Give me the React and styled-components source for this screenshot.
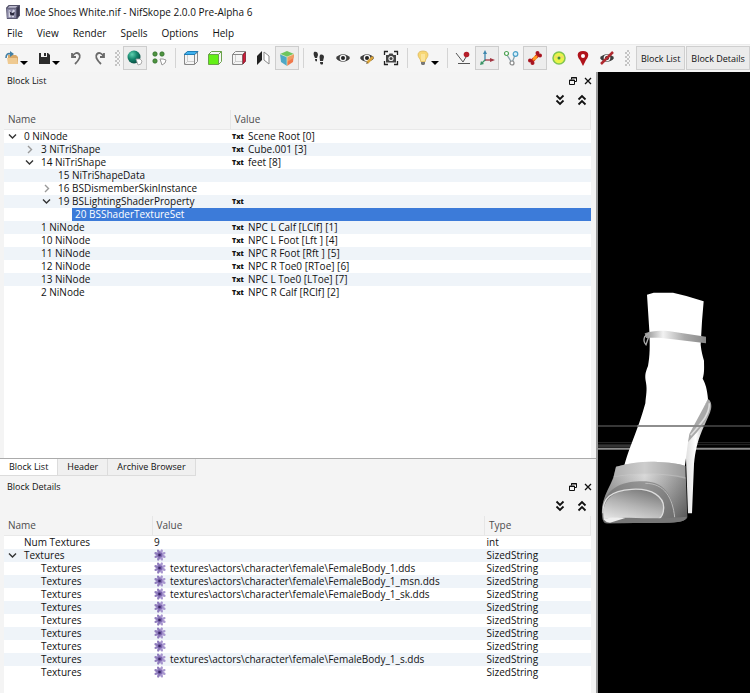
import React from "react";
import { useState } from "react";
import styled, { createGlobalStyle } from "styled-components";

const GlobalStyle = createGlobalStyle`
    *{
        box-sizing: border-box;
    }
    body{
        margin: 0;
        background: #f4f4f4;
        color: #111;
        font-family: "Open Sans", "Noto Sans", sans-serif;
        font-size: 10px;
    }
    button{
        font: inherit;
        color: inherit;
        background: none;
        border: 0;
        padding: 0;
        margin: 0;
    }
    svg{
        display: block;
    }
`;

const Window = styled.div`
    min-height: 100vh;
    display: flex;
    flex-direction: column;
`;
const TitleBar = styled.header`
    display: flex;
    align-items: center;
    gap: 5px;
    height: 23px;
    padding-left: 6px;
    background: #fff;
`;
const WindowTitle = styled.h1`
    margin: 0;
    font-size: 10px;
    font-weight: 400;
    white-space: nowrap;
`;
const MenuBar = styled.nav`
    display: flex;
    gap: 14px;
    height: 21px;
    padding-left: 7px;
    background: #fff;
`;
const MenuItem = styled.button`
    line-height: 21px;
`;
const ToolBar = styled.div`
    display: flex;
    align-items: center;
    height: 28px;
    padding-bottom: 1px;
    background: #f5f5f5;
    border-top: 1px solid #ececec;
    overflow: hidden;
`;
const ToolButton = styled.button`
    flex: none;
    display: flex;
    align-items: center;
    justify-content: ${(p) => (p.$menu ? "flex-start" : "center")};
    width: ${(p) => (p.$menu ? 32 : 24)}px;
    height: 24px;
    padding-left: ${(p) => (p.$menu ? 4 : 0)}px;
    border: ${(p) => (p.$on ? "1px solid #cdcdcd" : "0")};
    background: ${(p) => (p.$on ? "#ededed" : "transparent")};
`;
const Caret = styled.svg`
    flex: none;
    align-self: flex-end;
    margin-bottom: 5px;
`;
const Separator = styled.span`
    flex: none;
    width: 8px;
    height: 20px;
    background: linear-gradient(#d4d4d4, #d4d4d4) 4px 0 / 1px 100% no-repeat;
`;
const Grip = styled.span`
    flex: none;
    width: 5px;
    height: 16px;
    margin: 0 ${(p) => p.$space || 3}px;
    background: repeating-conic-gradient(#c4c4c4 0 25%, #f5f5f5 0 50%) 0 0 / 4px 4px;
`;
const PanelButton = styled.button`
    flex: none;
    height: 24px;
    margin-right: 1px;
    padding: 0 4px;
    border: 1px solid #cfcfcf;
    background: #ebebeb;
    font-size: 9px;
    white-space: nowrap;
`;
const Workspace = styled.main`
    flex: 1;
    display: grid;
    grid-template-columns: minmax(0, 598fr) minmax(0, 152fr);
`;
const Docks = styled.div`
    display: flex;
    flex-direction: column;
    border-right: 2px solid #9a9a9a;
`;
const Dock = styled.section`
    flex: ${(p) => p.$grow} 1 0;
    display: flex;
    flex-direction: column;
`;
const DockTitle = styled.div`
    display: flex;
    align-items: center;
    gap: 7px;
    height: 17px;
    padding: 0 4px 0 7px;
`;
const DockName = styled.h2`
    flex: 1;
    margin: 0;
    font-size: 9px;
    font-weight: 400;
`;
const DockTools = styled.div`
    display: flex;
    justify-content: flex-end;
    align-items: center;
    gap: 12px;
    height: 21px;
    padding-right: 9px;
`;
const TreeFrame = styled.div`
    flex: 1;
    margin: 0 5px 0 4px;
    background: linear-gradient(#f4f4f4 19px, #fff 19px);
`;
const Tree = styled.table`
    width: 100%;
    table-layout: fixed;
    border-collapse: collapse;
`;
const HeadCell = styled.th`
    width: ${(p) => p.$width || "auto"};
    height: 19px;
    padding: 0 0 0 4px;
    border-right: 1px solid #e6e6e6;
    border-bottom: 1px solid #e9e9e9;
    color: #4c4c4c;
    font-weight: 400;
    line-height: 16px;
    text-align: left;
`;
const Row = styled.tr`
    background: ${(p) => (p.$selected ? "#3c7bd9" : p.$odd ? "#eff4f9" : "#fff")};
    color: ${(p) => (p.$selected ? "#fff" : "inherit")};
`;
const Cell = styled.td`
    height: 13px;
    padding: 0;
    line-height: 13px;
    white-space: nowrap;
    overflow: hidden;
`;
const NameBox = styled.div`
    display: flex;
    height: 13px;
    padding-left: ${(p) => p.$depth * 17}px;
    background: ${(p) => (p.$selected ? "#fff" : "none")};
`;
const Expander = styled.button`
    flex: none;
    display: flex;
    align-items: center;
    justify-content: center;
    width: 17px;
    height: 13px;
`;
const NodeName = styled.span`
    flex: 1;
    padding-left: 3px;
    background: ${(p) => (p.$selected ? "#3c7bd9" : "none")};
`;
const ValueBox = styled.div`
    display: flex;
    align-items: center;
    gap: 4px;
    height: 13px;
    padding-left: 2px;
`;
const TxtMark = styled.span`
    width: 12px;
    font-size: 7px;
    font-weight: 800;
`;
const Tabs = styled.div`
    display: flex;
    align-items: flex-start;
    height: 20px;
    border-top: 1px solid #ababab;
`;
const Tab = styled.button`
    height: 17px;
    padding: 0 9px;
    font-size: 9px;
    line-height: 16px;
    background: ${(p) => (p.$active ? "#fff" : "#f0f0f0")};
    border-right: 1px solid #dcdcdc;
    border-bottom: 1px solid #dcdcdc;
`;
const Viewport = styled.div`
    background: #000;
    overflow: hidden;
`;

const Icon = ({ children, size = 16 }) => (
    <svg width={size} height={size} viewBox="0 0 16 16" fill="none" aria-hidden="true">{children}</svg>
);
const DownCaret = () => (
    <Caret width="8" height="4" viewBox="0 0 8 4"><path d="M0 0h8L4 4z" fill="#000" /></Caret>
);

const AppIcon = () => (
    <Icon size={14}>
        <path d="M0 3 3 0h13v12l-3 4H1z" fill="#55546b" />
        <path d="M1 4h11v11H1z" fill="#8583a0" />
        <path d="M12 4l3-3v11l-3 3z" fill="#37364d" />
        <path d="M2 3l2-2h9l-2 2z" fill="#bdbbd0" />
        <path d="M3 6h2l1 4 2-5 2 1-1 8H7l-1-2-1 2H3z" fill="#d9d9e8" />
        <path d="M4 7l3 2 3-1-1 4H5z" fill="#2d2c42" />
    </Icon>
);
const OpenIcon = () => (
    <Icon>
        <path d="M4 5h8l2 2v7H4z" fill="#d9a867" />
        <path d="M3 8h10l1 6H4z" fill="#efca91" />
        <path d="M2 8c0-4 2-5 5-4" stroke="#427fa3" strokeWidth="1.600" />
        <path d="M6 1l4 3-4 3z" fill="#427fa3" />
    </Icon>
);
const SaveIcon = () => (
    <Icon>
        <path d="M3 3h9l2 2v9H3z" fill="#2c2c2c" />
        <path d="M5 3h6v4H5z" fill="#f5f5f5" />
        <path d="M8 3h2v3H8z" fill="#2c2c2c" />
    </Icon>
);
const UndoIcon = () => (
    <Icon>
        <path d="M4 3v4h4M4 7c2-4 5-5 7-3s1 5-4 10" stroke="#6a6a6a" strokeWidth="1.800" />
    </Icon>
);
const RedoIcon = () => (
    <Icon>
        <path d="M12 3v4H8M12 7C10 3 7 2 5 4s-1 5 4 10" stroke="#6a6a6a" strokeWidth="1.800" />
    </Icon>
);
const SphereIcon = () => (
    <Icon>
        <defs>
            <radialGradient id="ball" cx=".35" cy=".3" r=".75">
                <stop offset="0" stopColor="#5fd1b0" />
                <stop offset=".5" stopColor="#16866d" />
                <stop offset="1" stopColor="#074a40" />
            </radialGradient>
        </defs>
        <circle cx="7" cy="7" r="6.500" fill="url(#ball)" />
        <path d="M9 9l4 0 2 2-1 3-3 1z" fill="#fff" stroke="#999" strokeWidth=".8" />
    </Icon>
);
const VertexIcon = () => (
    <Icon>
        <g fill="#4f9440" stroke="#2c6a2a" strokeWidth=".7">
            <circle cx="4" cy="4" r="2.200" />
            <circle cx="11" cy="4" r="2.200" />
            <circle cx="4" cy="11" r="2.200" />
        </g>
        <path d="M9 9h3l3 1-1 3-3 2z" fill="#fff" stroke="#999" />
    </Icon>
);
const BoxIcon = ({ face }) => (
    <Icon>
        {face === "front" && <path d="M1.500 4.500h10v10h-10z" fill="#64f016" />}
        {face === "side" && <path d="M11.500 4.500l3-3v10l-3 3z" fill="#d11c3a" />}
        {face === "top" && <path d="M1.500 4.500l3-3h10l-3 3z" fill="#3fb1ee" />}
        <path
            d="M1.500 4.500h10v10h-10zM1.500 4.500l3-3h10l-3 3M14.500 1.500v10l-3 3"
            stroke={face === "front" ? "#6aa24a" : "#888"}
            strokeLinejoin="round"
        />
        {face === "top" && <path d="M1 4.500h11l3-3H4.500z" stroke="#1e7fb9" />}
        {face !== "front" && <path d="M4.500 5v6.500H11M4.500 11.500l-3 3" stroke="#bbb" strokeWidth=".7" />}
        {face === "side" && <path d="M12 5l2.500-3v9L12 14z" stroke="#8e1427" strokeWidth=".7" />}
    </Icon>
);
const FlipIcon = () => (
    <Icon>
        <path d="M2 6l5-5v9l-5 5z" fill="#222" />
        <path d="M9 2l5 4v8l-5-4z" fill="#fff" stroke="#888" />
    </Icon>
);
const ShadedCubeIcon = () => (
    <Icon>
        <path d="M1 4l7-3 7 3-7 3z" fill="#6fc55e" />
        <path d="M1 4l7 3v9l-6-4z" fill="#4ea8c6" />
        <path d="M8 7l7-3-1 8-6 4z" fill="#f0784b" />
        <path d="M8 7l7-3-.5 4L8 12z" fill="#ef9c62" />
        <path d="M1 4l7 3 7-3M8 7v9" stroke="#d7e8c0" strokeWidth=".7" />
    </Icon>
);
const FeetIcon = () => (
    <Icon>
        <g fill="#333">
            <path d="M3 2c2-1 4 0 4 3L6 8H4C3 6 2 4 3 2zM4 9h2v2c-1 1-2 0-2-2z" />
            <path d="M9 5c2-1 4 0 4 2l-1 4H9C9 9 8 7 9 5zM9 12h3v2c-1 1-3 1-3-2z" />
        </g>
    </Icon>
);
const EyeIcon = ({ pencil, struck }) => (
    <Icon>
        <path d="M1 8c3-5 11-5 14 0-3 5-11 5-14 0z" fill="#3d3d3d" />
        <circle cx="8" cy="8" r="3.300" fill="#f5f5f5" />
        <circle cx="8" cy="8" r="2" fill="#222" />
        {pencil && <path d="M8 13l6-6" stroke="#d9a33a" strokeWidth="2.500" />}
        {pencil && <path d="M7 14l1-2 1 1z" fill="#444" />}
        {struck && <path d="M2 14L14 2" stroke="#b02a30" strokeWidth="2.500" />}
    </Icon>
);
const CameraIcon = () => (
    <Icon>
        <path d="M1.500 5V1.500H5M11 1.500h3.500V5M14.500 11v3.500H11M5 14.500H1.500V11" stroke="#222" strokeWidth="1.300" />
        <path d="M3 5h2.500l1-1.500h3l1 1.500H13v7.500H3z" fill="#444" />
        <circle cx="8" cy="8.500" r="2.600" fill="#eee" />
        <circle cx="8" cy="8.500" r="1.500" fill="#444" />
    </Icon>
);
const BulbIcon = () => (
    <Icon>
        <path d="M8 1c6 0 6 5 3 8l-1 3H6L5 9C2 6 2 1 8 1z" fill="#f7d673" stroke="#d9b152" strokeWidth=".7" />
        <path d="M7 4v7M9 4v7" stroke="#fff3c4" />
        <path d="M6 12h4v2l-1 1H7l-1-1z" fill="#777" />
    </Icon>
);
const GroundIcon = () => (
    <Icon>
        <path d="M1 3l7 9M3 13.500h12M8 12l3-5" stroke="#555" />
        <circle cx="11.500" cy="4.500" r="2.800" fill="#b51f2b" />
    </Icon>
);
const AxesIcon = () => (
    <Icon>
        <path d="M6 11V3" stroke="#3e87ad" strokeWidth="1.300" />
        <path d="M6 0l2 4H4z" fill="#3e87ad" />
        <path d="M6 10h6" stroke="#a33642" strokeWidth="1.300" />
        <path d="M11 8l5 2-5 2z" fill="#a33642" />
        <path d="M6 10l-3 3" stroke="#3d9568" strokeWidth="1.300" />
        <path d="M1 15l1-4 3 3z" fill="#3d9568" />
    </Icon>
);
const NodesIcon = () => (
    <Icon>
        <path d="M4 5l5 8 3-8" stroke="#8aa3ad" strokeWidth="1.300" />
        <circle cx="3.500" cy="3.500" r="2" fill="#fff" stroke="#4da254" strokeWidth="1.200" />
        <circle cx="12.500" cy="4" r="2.300" fill="#d8f0fa" stroke="#4ba0c8" strokeWidth="1.200" />
        <circle cx="9" cy="13" r="2" fill="#fff" stroke="#888" strokeWidth="1.200" />
    </Icon>
);
const BoneIcon = () => (
    <Icon>
        <defs>
            <linearGradient id="bone" x1="0" y1="1" x2="1" y2="0">
                <stop offset="0" stopColor="#9e1022" />
                <stop offset=".3" stopColor="#d4240f" />
                <stop offset=".5" stopColor="#ffb52a" />
                <stop offset=".7" stopColor="#d4240f" />
                <stop offset="1" stopColor="#9e1022" />
            </linearGradient>
        </defs>
        <path d="M4 12l8-8" stroke="url(#bone)" strokeWidth="3.500" />
        <g fill="#a81420">
            <circle cx="3" cy="10.500" r="2" />
            <circle cx="5.500" cy="13" r="2" />
            <circle cx="10.500" cy="3" r="2" />
            <circle cx="13" cy="5.500" r="2" />
        </g>
        <path d="M6 10l4-4" stroke="#ff9d22" strokeWidth="2" />
    </Icon>
);
const TargetIcon = () => (
    <Icon>
        <circle cx="8" cy="8" r="6" fill="#e9f448" stroke="#80c552" strokeWidth="1.500" />
        <path d="M3 7h10" stroke="#f5c878" />
        <circle cx="8" cy="8" r="1.500" fill="#3c8f3e" />
    </Icon>
);
const PinIcon = () => (
    <Icon>
        <path d="M8 1c7 0 6 6 3 9l-3 6-3-6C2 7 1 1 8 1z" fill="#b0131b" />
        <circle cx="8" cy="6" r="2" fill="#fff" />
    </Icon>
);
const FloatIcon = () => (
    <svg width="8" height="8" viewBox="0 0 8 8" fill="none" aria-hidden="true">
        <path d="M2.500 2.500v-2h5v4h-2M.5 3h5v4.500h-5z" stroke="#111" />
        <path d="M0 3.500h6M2 1h6" stroke="#111" />
    </svg>
);
const CloseIcon = () => (
    <svg width="8" height="8" viewBox="0 0 8 8" aria-hidden="true">
        <path d="M1 1l6 6M7 1L1 7" stroke="#111" strokeWidth="1.300" />
    </svg>
);
const DoubleChevron = ({ up }) => (
    <svg width="10" height="12" viewBox="0 0 10 12" fill="none" aria-hidden="true">
        <path
            d={up ? "M1.500 5.500L5 2l3.500 3.500M1.500 10.500L5 7l3.500 3.500" : "M1.500 1.500L5 5l3.500-3.500M1.500 6.500L5 10l3.500-3.500"}
            stroke="#111"
            strokeWidth="1.800"
        />
    </svg>
);
const Chevron = ({ open }) => (
    <svg width="9" height="9" viewBox="0 0 9 9" fill="none" aria-hidden="true">
        <path d={open ? "M1 2.500L4.500 6 8 2.500" : "M3 1l3.500 3.500L3 8"} stroke={open ? "#333" : "#999"} strokeWidth="1.400" />
    </svg>
);
const FlowerIcon = () => (
    <svg width="12" height="12" viewBox="0 0 12 12" aria-hidden="true">
        {[22, 67, 112, 157, 202, 247, 292, 337].map((a) => (
            <ellipse key={a} cx="6" cy="2.600" rx="1.300" ry="2.600" fill={a > 180 ? "#8f7cbc" : "#a897cf"} transform={`rotate(${a} 6 6)`} />
        ))}
        <circle cx="6" cy="6" r="2.400" fill="#7a64ad" />
        <circle cx="5.500" cy="6" r="1.300" fill="#3a2866" />
    </svg>
);

const tools = [
    { label: "Open", icon: <OpenIcon />, menu: true },
    { label: "Save", icon: <SaveIcon />, menu: true },
    { label: "Undo", icon: <UndoIcon /> },
    { label: "Redo", icon: <RedoIcon /> },
    "grip",
    { label: "Select object", icon: <SphereIcon />, on: true },
    { label: "Select vertex", icon: <VertexIcon /> },
    "line",
    { label: "View top", icon: <BoxIcon face="top" /> },
    { label: "View front", icon: <BoxIcon face="front" /> },
    { label: "View side", icon: <BoxIcon face="side" /> },
    { label: "Flip view", icon: <FlipIcon /> },
    { label: "Perspective", icon: <ShadedCubeIcon />, on: true },
    "line",
    { label: "Walk", icon: <FeetIcon /> },
    { label: "Show view", icon: <EyeIcon /> },
    { label: "Edit view", icon: <EyeIcon pencil /> },
    { label: "Screenshot", icon: <CameraIcon /> },
    "line",
    { label: "Lighting", icon: <BulbIcon />, menu: true },
    "line",
    { label: "Show grid", icon: <GroundIcon /> },
    { label: "Show axes", icon: <AxesIcon />, on: true },
    { label: "Show nodes", icon: <NodesIcon /> },
    { label: "Show bones", icon: <BoneIcon />, on: true },
    { label: "Show collision", icon: <TargetIcon /> },
    { label: "Show markers", icon: <PinIcon /> },
    { label: "Show hidden", icon: <EyeIcon struck /> },
];

const blocks = [
    { name: "0 NiNode", depth: 0, open: true, value: "Scene Root [0]" },
    { name: "3 NiTriShape", depth: 1, open: false, value: "Cube.001 [3]" },
    { name: "14 NiTriShape", depth: 1, open: true, value: "feet [8]" },
    { name: "15 NiTriShapeData", depth: 2 },
    { name: "16 BSDismemberSkinInstance", depth: 2, open: false },
    { name: "19 BSLightingShaderProperty", depth: 2, open: true, value: "" },
    { name: "20 BSShaderTextureSet", depth: 3 },
    { name: "1 NiNode", depth: 1, value: "NPC L Calf [LClf] [1]" },
    { name: "10 NiNode", depth: 1, value: "NPC L Foot [Lft ] [4]" },
    { name: "11 NiNode", depth: 1, value: "NPC R Foot [Rft ] [5]" },
    { name: "12 NiNode", depth: 1, value: "NPC R Toe0 [RToe] [6]" },
    { name: "13 NiNode", depth: 1, value: "NPC L Toe0 [LToe] [7]" },
    { name: "2 NiNode", depth: 1, value: "NPC R Calf [RClf] [2]" },
];

const texturePath = "textures\\actors\\character\\female\\";
const textures = ["FemaleBody_1.dds", "FemaleBody_1_msn.dds", "FemaleBody_1_sk.dds", "", "", "", "", "FemaleBody_1_s.dds", ""];

const details = [
    { name: "Num Textures", depth: 0, value: "9", type: "int" },
    { name: "Textures", depth: 0, open: true, value: "", type: "SizedString" },
    ...textures.map((file) => ({
        name: "Textures",
        depth: 1,
        value: file && texturePath + file,
        type: "SizedString",
    })),
];

function NodeCell({ node, selected }) {
    return (
        <Cell>
            <NameBox $depth={node.depth} $selected={selected}>
                <Expander as={node.open === undefined ? "span" : "button"} aria-label={node.open === undefined ? undefined : "Toggle " + node.name}>
                    {node.open !== undefined && <Chevron open={node.open} />}
                </Expander>
                <NodeName $selected={selected}>{node.name}</NodeName>
            </NameBox>
        </Cell>
    );
}

function DockHeader({ title }) {
    return (
        <>
            <DockTitle>
                <DockName>{title}</DockName>
                <button aria-label={"Float " + title}><FloatIcon /></button>
                <button aria-label={"Close " + title}><CloseIcon /></button>
            </DockTitle>
            <DockTools>
                <button aria-label="Expand all"><DoubleChevron /></button>
                <button aria-label="Collapse all"><DoubleChevron up /></button>
            </DockTools>
        </>
    );
}

function BlockList() {
    const [selected, setSelected] = useState("20 BSShaderTextureSet");

    return (
        <Tree>
            <thead>
                <tr>
                    <HeadCell $width="226px">Name</HeadCell>
                    <HeadCell>Value</HeadCell>
                </tr>
            </thead>
            <tbody>
                {blocks.map((node, i) => (
                    <Row key={node.name} $odd={i % 2 === 1} $selected={node.name === selected} onClick={() => setSelected(node.name)}>
                        <NodeCell node={node} selected={node.name === selected} />
                        <Cell>
                            {node.value !== undefined && <ValueBox><TxtMark>Txt</TxtMark>{node.value}</ValueBox>}
                        </Cell>
                    </Row>
                ))}
            </tbody>
        </Tree>
    );
}

function BlockDetails() {
    return (
        <Tree>
            <thead>
                <tr>
                    <HeadCell $width="148px">Name</HeadCell>
                    <HeadCell>Value</HeadCell>
                    <HeadCell $width="106px">Type</HeadCell>
                </tr>
            </thead>
            <tbody>
                {details.map((node, i) => (
                    <Row key={i} $odd={i % 2 === 1}>
                        <NodeCell node={node} />
                        <Cell>
                            <ValueBox>
                                {node.type === "SizedString" && <FlowerIcon />}
                                {node.value}
                            </ValueBox>
                        </Cell>
                        <Cell><ValueBox>{node.type}</ValueBox></Cell>
                    </Row>
                ))}
            </tbody>
        </Tree>
    );
}

// high heel with the foot mesh untextured
function Model() {
    return (
        <svg width="100%" viewBox="0 0 456 1863" role="img" aria-label="Shoe model">
            <defs>
                <linearGradient id="strap" x1="0" x2="1">
                    <stop offset="0" stopColor="#8c8c8c" />
                    <stop offset=".3" stopColor="#f2f2f2" />
                    <stop offset=".65" stopColor="#aaa" />
                    <stop offset="1" stopColor="#888" />
                </linearGradient>
                <linearGradient id="upper" x1="0" x2="1">
                    <stop offset="0" stopColor="#7d7d7d" />
                    <stop offset=".5" stopColor="#cfcfcf" />
                    <stop offset=".75" stopColor="#9a9a9a" />
                    <stop offset="1" stopColor="#646464" />
                </linearGradient>
                <linearGradient id="shade" x1="0" y1="0" x2="0" y2="1">
                    <stop offset="0" stopColor="#fff" stopOpacity=".25" />
                    <stop offset="1" stopColor="#222" stopOpacity=".3" />
                </linearGradient>
                <linearGradient id="inner" x1=".7" y1="0" x2=".2" y2="1">
                    <stop offset="0" stopColor="#7a7a7a" />
                    <stop offset=".5" stopColor="#b2b2b2" />
                    <stop offset="1" stopColor="#e2e2e2" />
                </linearGradient>
                <linearGradient id="heel" x1="0" x2="1">
                    <stop offset="0" stopColor="#ddd" />
                    <stop offset=".4" stopColor="#fff" />
                    <stop offset="1" stopColor="#8a8a8a" />
                </linearGradient>
            </defs>
            <g transform="translate(0 624)">
                <path d="M0 488h456M0 494h456" stroke="#2b2b2b" strokeWidth="3" />
                <path d="M0 506h456" stroke="#8d8d8d" strokeWidth="6" />
                <path d="M0 498h100" stroke="#666" strokeWidth="3" />
                <path d="M332 358c10 10 10 24 4 40l-24 54c-14 34-20 60-24 100l-6 148h-12l-8-220 30-60z" fill="url(#heel)" />
                <path d="M330 358c12 10 10 26 4 40-16 40-40 60-66 90l6-40z" fill="#a9a9a9" />
                <path d="M334 370c0 40-30 64-56 96" stroke="#ddd" strokeWidth="5" fill="none" />
                <path
                    d="M147 44l20-6h58l40 10 52 16-5 60-4 70c2 20 6 34 10 48 0 18 2 34-4 54 8 14 14 32 16 62l-56 104c-6 30-8 64-14 100H78c14-60 40-104 64-192 2-24 6-40 2-62-4-22-2-30 6-50 6-30 6-60 4-106z"
                    fill="#fff"
                />
                <path d="M0 438h456" stroke="#4a4a4a" strokeWidth="4" />
                <path d="M118 438h196" stroke="#969696" strokeWidth="5" />
                <path d="M140 160c24-10 60-10 90-4l94 14v20l-100-12c-24-4-50-6-80-4z" fill="url(#strap)" />
                <path d="M154 158l-14 12c-4 10 0 20 4 24l8-24" stroke="#aaa" strokeWidth="4" fill="none" />
                <path
                    d="M54 560c44-12 84-16 126-14 34 2 58 4 82 12l6 154c-4 12-28 16-70 16L24 730c-16-4-14-44-8-66 6-24 20-46 30-70z"
                    fill="url(#upper)"
                />
                <path d="M46 590c60-12 150-14 218 2l4 120-60 16-184 2c-16-4-14-44-8-66 6-24 20-46 30-74z" fill="url(#shade)" />
                <path d="M54 560c44-12 84-16 126-14 34 2 58 4 82 12v38c-60-16-140-18-216-4z" fill="#ccc" opacity=".5" />
                <path d="M18 670c12-50 60-66 116-66 62 0 90 38 98 110l-52 4-160 6z" fill="#6e6e6e" opacity=".6" />
                <path d="M17 718c-8-54 22-84 84-90 64-4 96 24 96 54 0 18-6 30-16 36-60 4-120-8-164 0z" fill="url(#inner)" />
                <path d="M15 700c-2-44 22-68 86-72 64-4 96 24 96 54 0 18-6 30-16 36" stroke="#ddd" strokeWidth="4" fill="none" />
                <path d="M142 610c58 0 82 44 88 102" stroke="#bbb" strokeWidth="3" fill="none" />
                <path d="M16 718c60-12 120 4 250-8-4 14-20 18-68 18L26 730z" fill="#777" />
                <path d="M16 718c18-6 44-8 66-4l-46 14-10-2z" fill="#eee" />
            </g>
        </svg>
    );
}

function App() {
    return (
        <>
            <GlobalStyle />
            <Window>
                <TitleBar>
                    <AppIcon />
                    <WindowTitle>Moe Shoes White.nif - NifSkope 2.0.0 Pre-Alpha 6</WindowTitle>
                </TitleBar>
                <MenuBar>
                    {["File", "View", "Render", "Spells", "Options", "Help"].map((item) => (
                        <MenuItem key={item}>{item}</MenuItem>
                    ))}
                </MenuBar>
                <ToolBar>
                    {tools.map((tool, i) => {
                        if (tool === "grip") return <Grip key={i} />;
                        if (tool === "line") return <Separator key={i} />;
                        return (
                            <ToolButton key={i} $menu={tool.menu} $on={tool.on} aria-label={tool.label}>
                                {tool.icon}
                                {tool.menu && <DownCaret />}
                            </ToolButton>
                        );
                    })}
                    <Grip $space={6} />
                    <PanelButton>Block List</PanelButton>
                    <PanelButton>Block Details</PanelButton>
                </ToolBar>
                <Workspace>
                    <Docks>
                        <Dock $grow={406}>
                            <DockHeader title="Block List" />
                            <TreeFrame><BlockList /></TreeFrame>
                            <Tabs>
                                <Tab $active>Block List</Tab>
                                <Tab>Header</Tab>
                                <Tab>Archive Browser</Tab>
                            </Tabs>
                        </Dock>
                        <Dock $grow={215}>
                            <DockHeader title="Block Details" />
                            <TreeFrame><BlockDetails /></TreeFrame>
                        </Dock>
                    </Docks>
                    <Viewport><Model /></Viewport>
                </Workspace>
            </Window>
        </>
    );
}

export default App;
